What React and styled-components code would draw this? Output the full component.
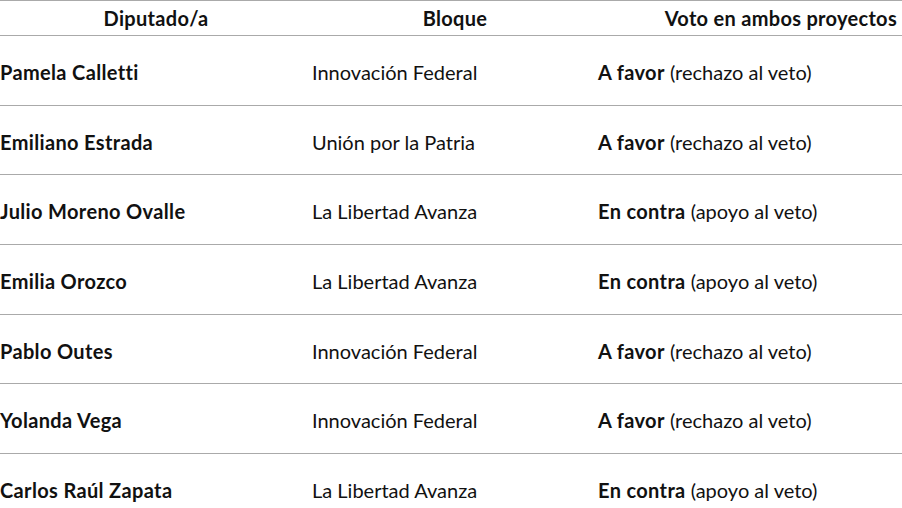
import React from "react"
import styled, { createGlobalStyle } from "styled-components"

const Global = createGlobalStyle`
  html, body {
    margin: 0;
    background: #fff;
    overflow: hidden;
  }
`

const rows = [
  { name: "Pamela Calletti", bloque: "Innovación Federal", vote: "favor" },
  { name: "Emiliano Estrada", bloque: "Unión por la Patria", vote: "favor" },
  { name: "Julio Moreno Ovalle", bloque: "La Libertad Avanza", vote: "contra" },
  { name: "Emilia Orozco", bloque: "La Libertad Avanza", vote: "contra" },
  { name: "Pablo Outes", bloque: "Innovación Federal", vote: "favor" },
  { name: "Yolanda Vega", bloque: "Innovación Federal", vote: "favor" },
  { name: "Carlos Raúl Zapata", bloque: "La Libertad Avanza", vote: "contra" },
]

const votes = {
  favor: { label: "A favor", note: "(rechazo al veto)" },
  contra: { label: "En contra", note: "(apoyo al veto)" },
}

const Table = styled.div`
  width: 100%;
  font-family: "Lato", "Noto Sans", sans-serif;
  font-size: 20px;
  color: #111;
  border-top: 1px solid #aaa;
`

const Row = styled.div`
  display: grid;
  grid-template-columns: 312px 286px 1fr;
  align-items: center;
  height: ${(p) => (p.$head ? "35px" : "69.7px")};
  padding-top: ${(p) => (p.$head ? "0" : "3px")};
  box-sizing: border-box;
  border-bottom: 1px solid #aaa;
`

const HeadCell = styled.div`
  font-weight: 700;
  letter-spacing: 0.3px;
  text-align: ${(p) => p.$align || "center"};
  padding-right: ${(p) => (p.$align === "right" ? "5px" : "0")};
  white-space: nowrap;
`

const Cell = styled.div`
  font-weight: ${(p) => (p.$bold ? 700 : 400)};
  letter-spacing: ${(p) => (p.$bold ? "0.35px" : "0")};
  white-space: nowrap;

  b {
    letter-spacing: 0.35px;
  }
`

const Vote = ({ type }) => (
  <Cell>
    <b>{votes[type].label}</b> {votes[type].note}
  </Cell>
)

export default function App() {
  return (
    <>
      <Global />
      <Table>
        <Row $head>
          <HeadCell>Diputado/a</HeadCell>
          <HeadCell>Bloque</HeadCell>
          <HeadCell $align="right">Voto en ambos proyectos</HeadCell>
        </Row>
        {rows.map((r) => (
          <Row key={r.name}>
            <Cell $bold>{r.name}</Cell>
            <Cell>{r.bloque}</Cell>
            <Vote type={r.vote} />
          </Row>
        ))}
      </Table>
    </>
  )
}
